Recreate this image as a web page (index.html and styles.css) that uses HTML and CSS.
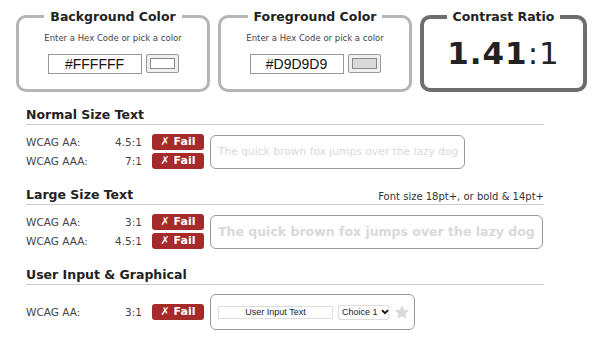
FILE: index.html
```html
<!DOCTYPE html>
<html lang="en">
<head>
    <meta charset="UTF-8">
    <title>Contrast Checker</title>
    <link rel="stylesheet" href="styles.css">
</head>
<body>
    <div class="pickers">
        <fieldset class="picker">
            <legend>Background Color</legend>
            <p class="hint">Enter a Hex Code or pick a color</p>
            <div class="hex-row">
                <input type="text" class="hex" value="#FFFFFF">
                <span class="swatch"><span class="swatch-fill bg"></span></span>
            </div>
        </fieldset>
        <fieldset class="picker">
            <legend>Foreground Color</legend>
            <p class="hint">Enter a Hex Code or pick a color</p>
            <div class="hex-row">
                <input type="text" class="hex" value="#D9D9D9">
                <span class="swatch"><span class="swatch-fill fg"></span></span>
            </div>
        </fieldset>
        <fieldset class="picker ratio-box">
            <legend>Contrast Ratio</legend>
            <div class="ratio"><b>1.41</b>:1</div>
        </fieldset>
    </div>

    <div class="results">
        <h2><span>Normal Size Text</span></h2>
        <div class="result-body">
            <div class="checks">
                <div class="check"><span class="level">WCAG AA:</span><span class="need">4.5:1</span><span class="fail">&#x2717; Fail</span></div>
                <div class="check"><span class="level">WCAG AAA:</span><span class="need">7:1</span><span class="fail">&#x2717; Fail</span></div>
            </div>
            <div class="sample normal">The quick brown fox jumps over the lazy dog</div>
        </div>

        <h2><span>Large Size Text</span><small>Font size 18pt+, or bold &amp; 14pt+</small></h2>
        <div class="result-body">
            <div class="checks">
                <div class="check"><span class="level">WCAG AA:</span><span class="need">3:1</span><span class="fail">&#x2717; Fail</span></div>
                <div class="check"><span class="level">WCAG AAA:</span><span class="need">4.5:1</span><span class="fail">&#x2717; Fail</span></div>
            </div>
            <div class="sample large">The quick brown fox jumps over the lazy dog</div>
        </div>

        <h2><span>User Input &amp; Graphical</span></h2>
        <div class="result-body">
            <div class="checks">
                <div class="check"><span class="level">WCAG AA:</span><span class="need">3:1</span><span class="fail">&#x2717; Fail</span></div>
            </div>
            <div class="sample ui">
                <input type="text" class="ui-input" value="User Input Text">
                <span class="ui-select">Choice 1<svg width="8" height="6" viewBox="0 0 8 6"><path d="M1 1.2l3 3 3-3" fill="none" stroke="#111" stroke-width="1.8"/></svg></span>
                <svg class="star" width="16" height="16" viewBox="0 0 24 24"><path d="M12 1.5l3.1 7.2 7.8.7-5.9 5.2 1.8 7.7L12 18.3l-6.8 4 1.8-7.7L1.1 9.4l7.8-.7z" fill="#d9d9d9"/></svg>
            </div>
        </div>
    </div>
</body>
</html>
```

FILE: styles.css
```css
* {
    margin: 0;
    padding: 0;
    box-sizing: border-box;
}
body {
    font-family: 'DejaVu Sans', Verdana, sans-serif;
    background: white;
    color: #333;
    width: 598px;
    height: 346px;
    overflow: hidden;
}
.pickers {
    display: flex;
    gap: 8px;
    padding: 9px 0 0 16px;
}
.picker {
    width: 194px;
    height: 83px;
    border: 3px solid #b5b5b5;
    border-radius: 10px;
    text-align: center;
}
.picker legend {
    margin: 0 auto;
    padding: 0 6px;
    font-size: 12.5px;
    font-weight: bold;
    color: #222;
}
.hint {
    font-size: 8.5px;
    color: #444;
    margin-top: 9px;
}
.hex-row {
    display: flex;
    justify-content: center;
    gap: 4px;
    margin-top: 11px;
}
.hex {
    width: 94px;
    height: 20px;
    border: 1px solid #999;
    font-family: 'Liberation Sans', Arial, sans-serif;
    font-size: 14px;
    color: #111;
    text-align: center;
}
.swatch {
    width: 33px;
    height: 19px;
    border: 1px solid #999;
    border-radius: 2px;
    padding: 3px;
    background: #f0f0f0;
}
.swatch-fill {
    display: block;
    height: 100%;
    border: 1px solid #888;
}
.swatch-fill.bg {
    background: #ffffff;
}
.swatch-fill.fg {
    background: #d9d9d9;
}
.ratio-box {
    width: 167px;
    border: 4px solid #6d6d6d;
}
.ratio {
    font-size: 31px;
    color: #222;
    margin-top: 11px;
    letter-spacing: 1px;
}
.results {
    width: 518px;
    margin-left: 26px;
    margin-top: 15px;
}
h2 {
    display: flex;
    justify-content: space-between;
    align-items: flex-end;
    font-size: 12.5px;
    color: #222;
    border-bottom: 1px solid #ccc;
    padding-bottom: 2px;
    margin-bottom: 9px;
}
h2 small {
    font-size: 10px;
    font-weight: normal;
    color: #333;
}
.result-body {
    display: flex;
    align-items: center;
    gap: 6px;
    margin-bottom: 18px;
}
.checks {
    display: flex;
    flex-direction: column;
    gap: 3px;
}
.check {
    display: flex;
    align-items: center;
    font-size: 10.5px;
    color: #444;
}
.level {
    width: 72px;
}
.need {
    width: 44px;
    text-align: right;
}
.fail {
    margin-left: 10px;
    width: 52px;
    height: 16px;
    line-height: 16px;
    background: #a52a2a;
    color: white;
    font-weight: bold;
    font-size: 11px;
    text-align: center;
    border-radius: 3px;
}
.sample {
    border: 1px solid #999;
    border-radius: 6px;
    color: #d9d9d9;
    display: flex;
    align-items: center;
    white-space: nowrap;
}
.sample.normal {
    width: 255px;
    height: 34px;
    padding-left: 7px;
    font-size: 10.7px;
}
.sample.large {
    width: 333px;
    height: 34px;
    padding-left: 7px;
    font-size: 12.5px;
    font-weight: bold;
}
.sample.ui {
    width: 205px;
    height: 36px;
    padding-left: 7px;
    gap: 5px;
}
.ui-input {
    width: 115px;
    height: 13px;
    border: 1px solid #ddd;
    font-family: 'Liberation Sans', Arial, sans-serif;
    font-size: 9px;
    color: #222;
    text-align: center;
}
.ui-select {
    display: flex;
    align-items: center;
    gap: 3px;
    width: 51px;
    height: 15px;
    padding: 0 2px 0 3px;
    border: 1px solid #ddd;
    border-radius: 2px;
    font-family: 'Liberation Sans', Arial, sans-serif;
    font-size: 9px;
    color: #222;
    background: white;
}
.ui-select svg, .star {
    flex-shrink: 0;
}
```
